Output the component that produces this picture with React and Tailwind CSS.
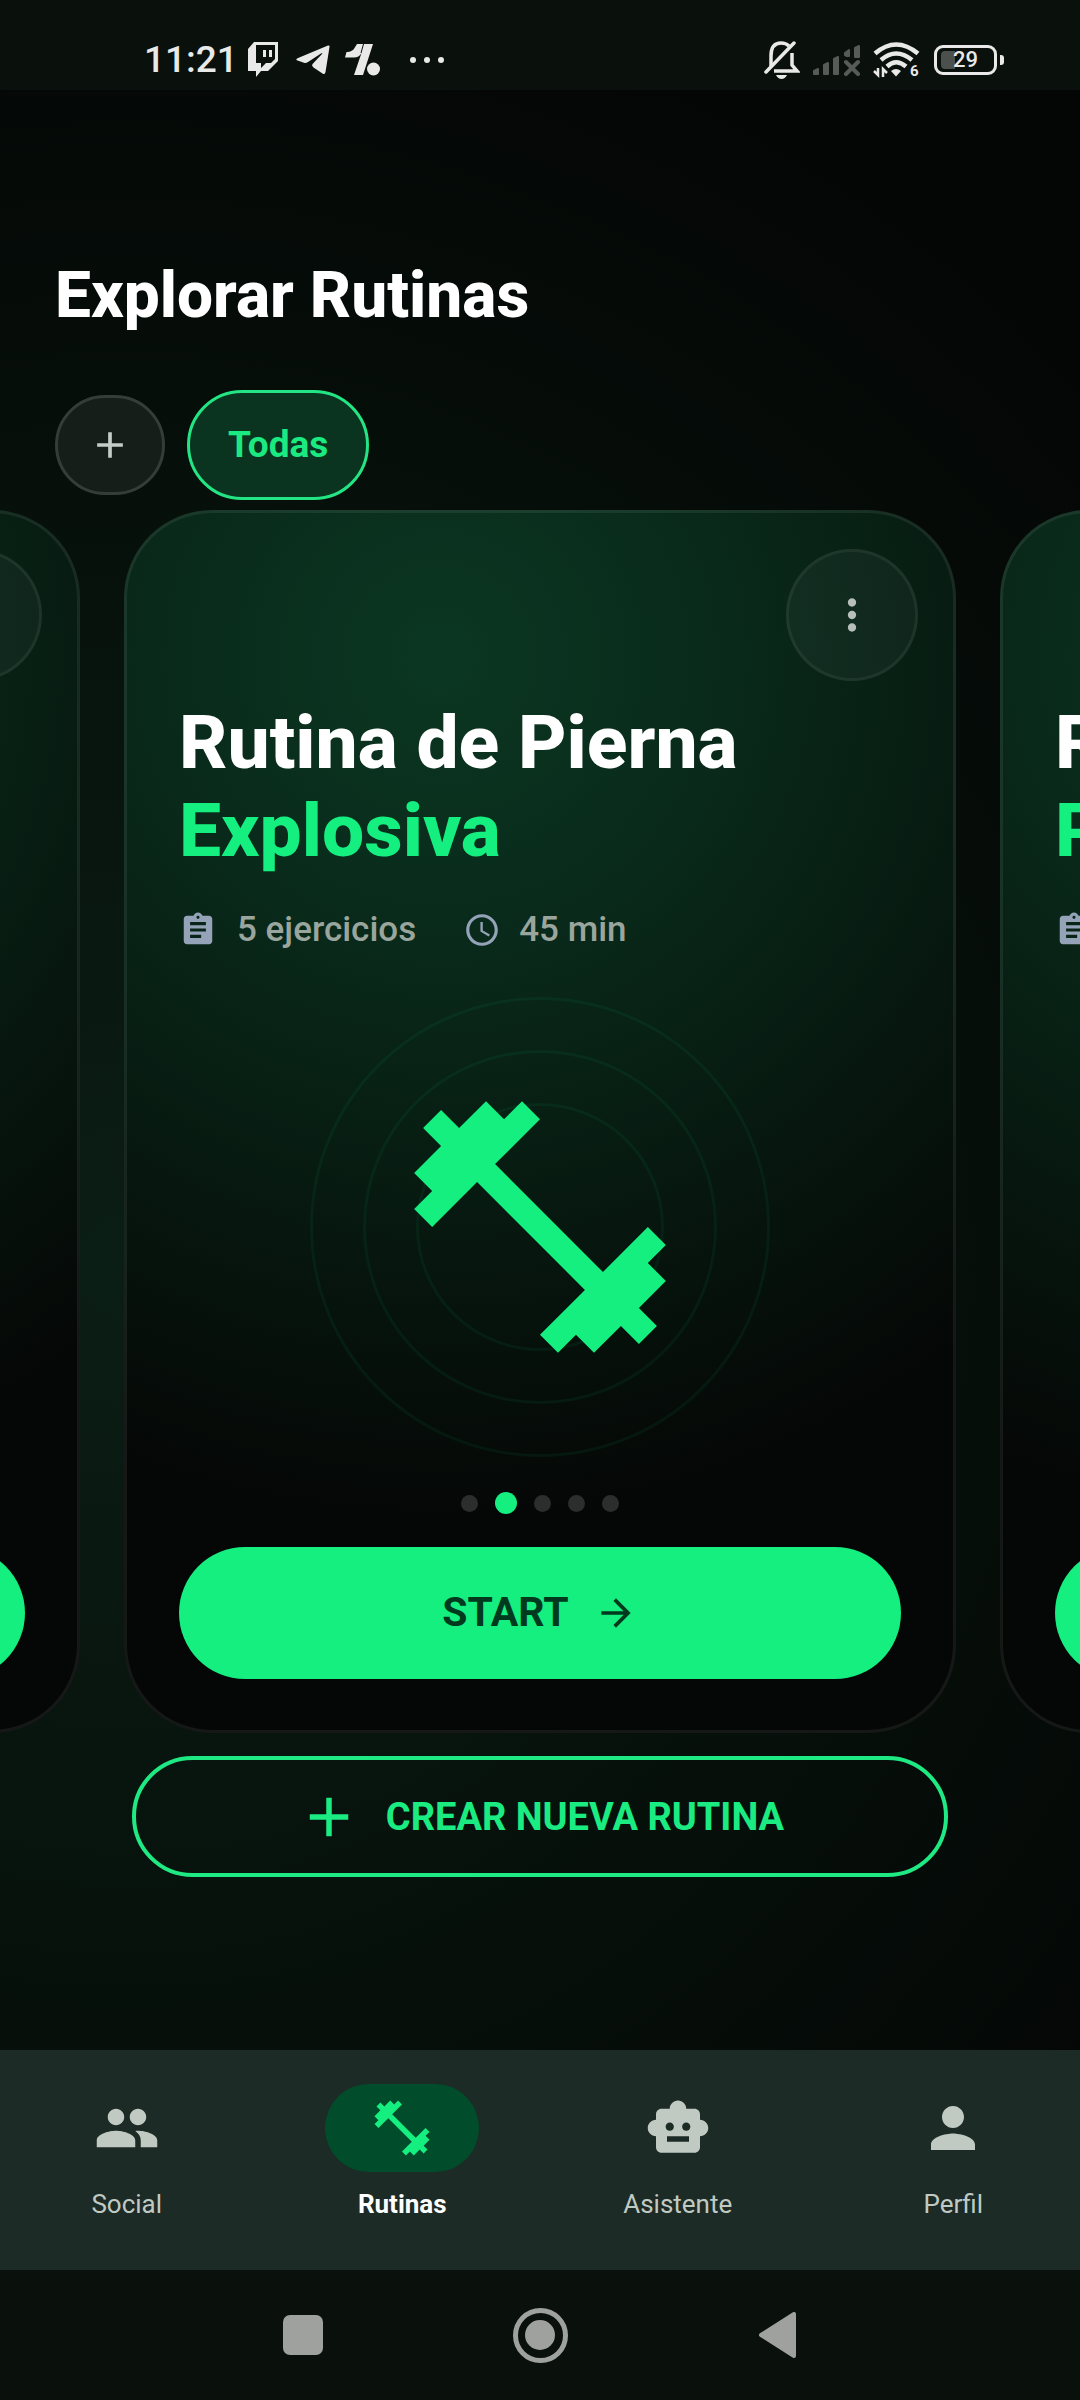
import { MdAccessTime, MdAdd, MdArrowForward, MdAssignment, MdFitnessCenter, MdMoreVert, MdPeople, MdPerson, MdSmartToy } from "react-icons/md";

const routines = [
  { title: "Rutina de Brazo", accent: "Total", exercises: 6, minutes: 40 },
  { title: "Rutina de Pierna", accent: "Explosiva", exercises: 5, minutes: 45 },
  { title: "Rutina de Pecho", accent: "Potente", exercises: 5, minutes: 50 },
];

const tabs = [
  { label: "Social", Icon: MdPeople },
  { label: "Rutinas", Icon: MdFitnessCenter, active: true },
  { label: "Asistente", Icon: MdSmartToy },
  { label: "Perfil", Icon: MdPerson },
];

function StatusBar() {
  return (
    <header className="flex h-[90px] items-center justify-between bg-[#0a100c] pt-[30px] pr-[76px] pl-[144px] text-[#e8e9e8]">
      <div className="flex items-center">
        <time className="w-[104px] text-[37px] leading-[40px] font-medium">11:21</time>
        <svg className="h-[36px] w-[30px]" viewBox="0 0 30 36" aria-label="Twitch">
          <path fill="currentColor" fillRule="evenodd" d="M6 0H30V19L20 29H13L8 35V29H0V7ZM8 3V21H13V26L18 21H23L27 17V3ZM15 8H18V15H15ZM21 8H24V15H21Z" />
        </svg>
        <svg className="ml-[18px] h-[30px] w-[34px]" viewBox="0 0 34 30" aria-label="Telegram">
          <path fill="currentColor" d="M32 0.500Q34 0 33.500 2L29.500 27Q29 30 26.500 28.500L17.500 22.500Q15 20.500 17 18.500L26 9Q27 7.500 25 8.500L12 17Q10 18.300 8 17.700L1.500 15.500Q-1 14.500 1.500 13.200Z" />
        </svg>
        <svg className="ml-[15px] h-[32px] w-[36px]" viewBox="0 0 36 32" aria-label="1.">
          <path fill="currentColor" d="M12 0H28L18 31H9L16.500 9Q14 13.500 9 13.500H0L1.500 8H3Q8 7 9.500 4Z" />
          <path stroke="#0a100c" strokeWidth="1" d="M18.500 0L16 9" />
          <circle cx="28.500" cy="25" r="6.500" fill="currentColor" />
        </svg>
        <svg className="ml-[28px] h-[8px] w-[36px]" viewBox="0 0 36 8" aria-label="Más">
          <g fill="currentColor">
            <circle cx="4" cy="4" r="3" />
            <circle cx="18" cy="4" r="3" />
            <circle cx="32" cy="4" r="3" />
          </g>
        </svg>
      </div>
      <div className="flex items-center">
        <svg className="h-[38px] w-[36px]" viewBox="0 0 36 38" fill="none" stroke="currentColor" strokeWidth="3.500" aria-label="Silencio">
          <path strokeLinecap="round" d="M2 31L30 2" />
          <path d="M7 25V15Q7 2 17 2Q22 2 25 5M28 12V24L33 30H10" />
          <path fill="currentColor" stroke="none" d="M12 34H23Q21 38 17.500 38T12 34Z" />
        </svg>
        <svg className="ml-[12px] h-[32px] w-[49px]" viewBox="0 0 49 32" aria-label="Sin señal">
          <g fill="#565b57" stroke="#565b57" strokeLinejoin="round" strokeWidth="2">
            <path d="M2 27L6 25V30H2ZM12 21L16 19V30H12ZM22 15L26 13V30H22ZM33 9L37 6V12H35L33 11ZM43 4L47 2V13H43Z" />
            <path d="M34 18L46 30M46 18L34 30" strokeWidth="4" strokeLinecap="round" />
          </g>
        </svg>
        <svg className="ml-[12px] h-[36px] w-[47px]" viewBox="0 0 47 36" aria-label="Wi-Fi 6">
          <g fill="none" stroke="currentColor" strokeWidth="4.500">
            <path d="M2 11.500Q23 -6.500 45 11.500" />
            <path d="M8 18Q23 5 39 18" />
            <path d="M14 24.500Q23 16 33 24.500" />
          </g>
          <path fill="currentColor" d="M18 29Q23 25 28 29L23 34.500Z" />
          <path d="M5 26V33L1 29M10 35V27L14 31" fill="none" stroke="currentColor" strokeWidth="2.500" />
          <text x="37" y="34" fill="currentColor" fontFamily="Roboto" fontWeight="700" fontSize="15">6</text>
        </svg>
        <div className="ml-[14px] flex items-center">
          <div className="relative flex h-[30px] w-[63px] items-center justify-center rounded-[9px] border-3 border-current">
            <span className="absolute left-[4px] h-[18px] w-[14px] rounded-l-[4px] bg-[#4b504c]" />
            <span className="relative text-[22px] leading-[24px] font-medium">29</span>
          </div>
          <span className="ml-[3px] h-[10px] w-[4px] rounded-r-[3px] bg-current" />
        </div>
      </div>
    </header>
  );
}

function RoutineCard({ title, accent, exercises, minutes }) {
  return (
    <article className="w-[calc(100%-248px)] shrink-0 rounded-[88px] border-3 border-white/7 bg-[radial-gradient(circle_860px_at_38%_12%,#0b3722_0%,#09291a_35%,#071910_65%,#050706_100%)] bg-origin-border px-[52px] pt-[36px] pb-[51px]">
      <div className="-mr-[17px] flex justify-end">
        <button aria-label="Opciones" className="flex size-[132px] items-center justify-center rounded-full border-3 border-white/6 bg-white/4 text-[#b7bfb9]">
          <MdMoreVert className="size-[50px]" />
        </button>
      </div>
      <h2 className="mt-[17px] text-[75px] leading-[88px] font-extrabold whitespace-nowrap text-white">
        {title}
        <span className="block text-[#14ef80]">{accent}</span>
      </h2>
      <div className="mt-[37px] flex items-center text-[35px] leading-[38px] text-[#9aa69d]">
        <MdAssignment className="mr-[20px] size-[38px] text-[#94a3b8]" />
        <span className="font-medium">{exercises} ejercicios</span>
        <MdAccessTime className="mr-[18px] ml-[47px] size-[38px] text-[#94a3b8]" />
        <span className="font-medium">{minutes} min</span>
      </div>
      <div className="mx-auto mt-[48px] flex size-[460px] items-center justify-center rounded-full border-3 border-[#14ef80]/6">
        <div className="flex size-[354px] shrink-0 items-center justify-center rounded-full border-3 border-[#14ef80]/6">
          <div className="flex size-[248px] shrink-0 items-center justify-center rounded-full border-3 border-[#14ef80]/6">
            <MdFitnessCenter className="size-[302px] shrink-0 text-[#14ef80]" />
          </div>
        </div>
      </div>
      <div className="mt-[35px] flex h-[22px] items-center justify-center gap-[17px]">
        {[0, 1, 2, 3, 4].map((i) => (
          <span key={i} className={i === 1 ? "size-[22px] rounded-full bg-[#14ef80]" : "size-[17px] rounded-full bg-[#2b2e2c]"} />
        ))}
      </div>
      <button className="mt-[33px] flex h-[132px] w-full items-center justify-center gap-[25px] rounded-full bg-[#14ef80] text-[41px] font-bold text-[#003a1e]">
        START
        <MdArrowForward className="size-[44px]" />
      </button>
    </article>
  );
}

export default function App() {
  return (
    <div className="flex min-h-screen flex-col overflow-hidden bg-black font-[Roboto,sans-serif]">
      <StatusBar />
      <main className="flex-1 bg-[radial-gradient(circle_1300px_at_12%_60%,#0b1e15_0%,#07120c_50%,#040605_100%)] pt-[165px] pb-[80px]">
        <h1 className="px-[55px] text-[64px] leading-[82px] font-extrabold text-white">Explorar Rutinas</h1>
        <div className="mt-[53px] flex items-center gap-[22px] px-[55px]">
          <button aria-label="Añadir filtro" className="flex h-[100px] w-[110px] items-center justify-center rounded-full border-3 border-[#363d39] bg-[#161e1a] text-[#c6ccc8]">
            <MdAdd className="size-[44px]" />
          </button>
          <button className="h-[110px] rounded-full border-3 border-[#23e583] bg-[#0a3320] px-[38px] text-[37px] font-bold text-[#1bea81]">Todas</button>
        </div>
        <section aria-label="Rutinas" className="mt-[10px] flex justify-center gap-[44px]">
          {routines.map((r) => (
            <RoutineCard key={r.title} {...r} />
          ))}
        </section>
        <div className="mt-[23px] px-[132px]">
          <button className="flex h-[121px] w-full items-center justify-center gap-[24px] rounded-full border-4 border-[#1fe983] text-[38px] leading-[44px] font-bold text-[#1aec82]">
            <MdAdd className="size-[66px]" />
            CREAR NUEVA RUTINA
          </button>
        </div>
      </main>
      <nav className="grid h-[220px] grid-cols-4 gap-[22px] bg-[#1c2b25] pt-[34px]">
        {tabs.map(({ label, Icon, active }) => (
          <a key={label} href={"#" + label} className={active ? "flex flex-col items-center font-bold text-white" : "flex flex-col items-center text-[#c0cac3]"}>
            <span className={active ? "flex h-[88px] w-[154px] items-center justify-center rounded-full bg-[#014c2b] text-[#14ef80]" : "flex h-[88px] w-[154px] items-center justify-center"}>
              <Icon className="size-[66px]" />
            </span>
            <span className="mt-[14px] text-[26px] leading-[36px]">{label}</span>
          </a>
        ))}
      </nav>
      <footer className="flex h-[130px] items-center justify-center gap-[182px] bg-[#0a100c] text-[#9fa19f]">
        <button aria-label="Recientes" className="flex size-[55px] items-center justify-center">
          <span className="size-[40px] rounded-[7px] bg-current" />
        </button>
        <button aria-label="Inicio" className="flex size-[55px] items-center justify-center rounded-full border-5 border-current">
          <span className="size-[30px] shrink-0 rounded-full bg-current" />
        </button>
        <button aria-label="Atrás" className="flex size-[55px] items-center justify-center">
          <svg className="h-[46px] w-[37px]" viewBox="0 0 37 46">
            <path d="M35 2V44L2 23Z" fill="currentColor" stroke="currentColor" strokeWidth="4" strokeLinejoin="round" />
          </svg>
        </button>
      </footer>
    </div>
  );
}
